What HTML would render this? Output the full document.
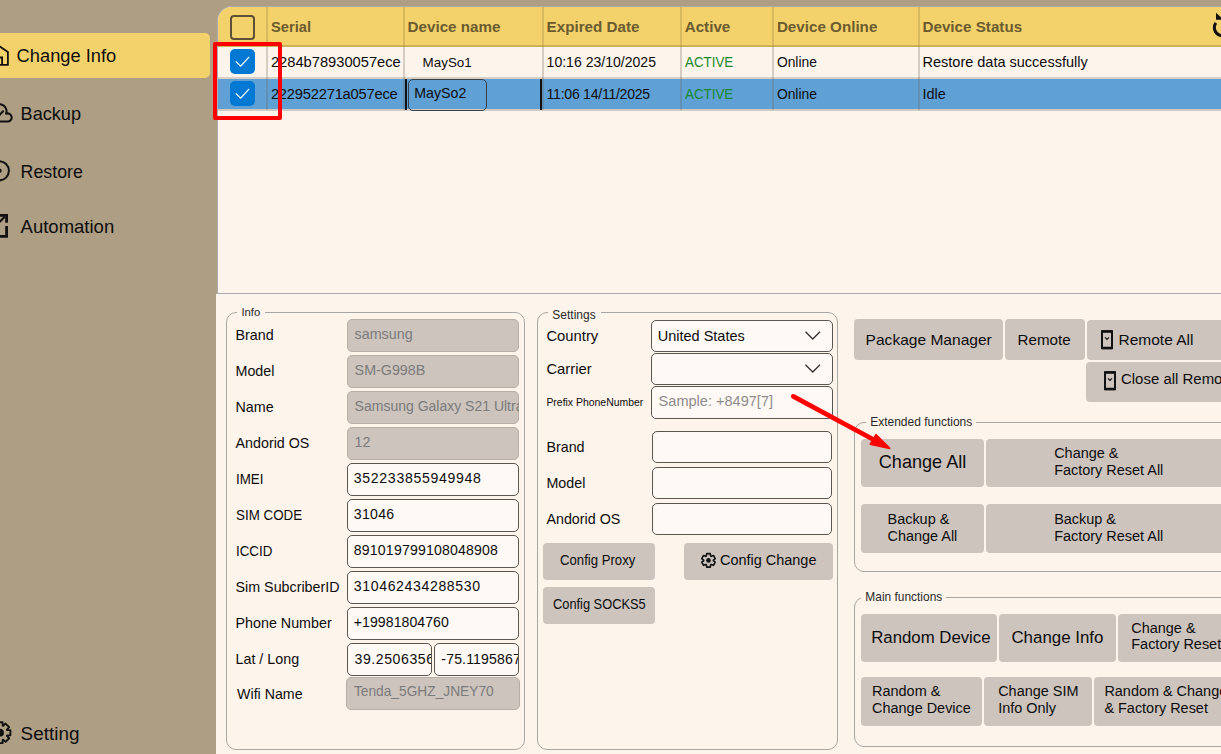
<!DOCTYPE html>
<html><head><meta charset="utf-8">
<style>
html,body{margin:0;padding:0;}
body{width:1221px;height:754px;overflow:hidden;position:relative;background:#AE9E84;font-family:"Liberation Sans",sans-serif;}
.t{position:absolute;line-height:1;white-space:nowrap;}
.r{position:absolute;}
</style></head><body>
<div class="r" style="left:0px;top:33px;width:210px;height:45px;background:#F4D26B;border-radius:0 5px 5px 0;"></div>
<div class="t" style="left:16.60px;top:47px;font-size:18.3px;color:#0d0d0d;">Change Info</div>
<div class="t" style="left:20.60px;top:105px;font-size:18.1px;color:#0d0d0d;">Backup</div>
<div class="t" style="left:20.60px;top:164px;font-size:17.8px;color:#0d0d0d;">Restore</div>
<div class="t" style="left:20.60px;top:218px;font-size:18.5px;color:#0d0d0d;">Automation</div>
<div class="t" style="left:20.60px;top:725px;font-size:18.9px;color:#0d0d0d;">Setting</div>
<svg class="r" style="left:0;top:0" width="30" height="754" viewBox="0 0 30 754">
<path d="M-1.5 45.6 L7.9 52 V64.8 H-2 M2.1 65 V57.5 H-2" fill="none" stroke="#111" stroke-width="1.8" stroke-linejoin="miter"/>
<path d="M-3 121.6 H7.6 A4.1 4.1 0 1 0 6.03 113.71 A7 7 0 0 0 -0.5 104.2 L-4 104.2" fill="none" stroke="#111" stroke-width="2" stroke-linejoin="round"/>
<path d="M-1 115.5 L3 111.3" fill="none" stroke="#111" stroke-width="2" stroke-linecap="round"/>
<circle cx="-0.7" cy="170.8" r="9.6" fill="none" stroke="#111" stroke-width="2"/>
<circle cx="-0.5" cy="170.7" r="2.2" fill="#111"/>
<path d="M-2 236.4 H6.6 V226" fill="none" stroke="#111" stroke-width="2.8"/>
<path d="M-2 215.4 H6.6 V222.7" fill="none" stroke="#111" stroke-width="2.8"/>
<path d="M-1 222.5 L5 216.5" fill="none" stroke="#111" stroke-width="2.2"/>
<path d="M7.11 730.02 L10.39 730.16 L10.39 735.24 L7.11 735.38 L6.92 735.84 L9.15 738.25 L5.55 741.85 L3.14 739.62 L2.68 739.81 L2.54 743.09 L-2.54 743.09 L-2.68 739.81 L-3.14 739.62 L-5.55 741.85 L-9.15 738.25 L-6.92 735.84 L-7.11 735.38 L-10.39 735.24 L-10.39 730.16 L-7.11 730.02 L-6.92 729.56 L-9.15 727.15 L-5.55 723.55 L-3.14 725.78 L-2.68 725.59 L-2.54 722.31 L2.54 722.31 L2.68 725.59 L3.14 725.78 L5.55 723.55 L9.15 727.15 L6.92 729.56Z" fill="none" stroke="#111" stroke-width="1.9" stroke-linejoin="round"/>
<circle cx="0" cy="732.7" r="3.9" fill="#111"/>
</svg>
<div class="r" style="left:217px;top:6px;width:1004px;height:288px;background:#FDF4EB;border-top-left-radius:15px;border-top:1px solid #ADADAD;border-left:1px solid #ADADAD;border-bottom:1px solid #ABABAB;box-sizing:border-box;"></div>
<div class="r" style="left:218px;top:7px;width:1003px;height:40px;background:#F4D26B;border-top-left-radius:14px;border-bottom:2px solid #CDB05A;box-sizing:border-box;"></div>
<div class="r" style="left:266px;top:7px;width:2px;height:38px;background:#D8BA5E;"></div>
<div class="r" style="left:266px;top:45px;width:2px;height:2px;background:#C0A452;"></div>
<div class="r" style="left:403px;top:7px;width:2px;height:38px;background:#D8BA5E;"></div>
<div class="r" style="left:403px;top:45px;width:2px;height:2px;background:#C0A452;"></div>
<div class="r" style="left:542px;top:7px;width:2px;height:38px;background:#D8BA5E;"></div>
<div class="r" style="left:542px;top:45px;width:2px;height:2px;background:#C0A452;"></div>
<div class="r" style="left:680px;top:7px;width:2px;height:38px;background:#D8BA5E;"></div>
<div class="r" style="left:680px;top:45px;width:2px;height:2px;background:#C0A452;"></div>
<div class="r" style="left:772px;top:7px;width:2px;height:38px;background:#D8BA5E;"></div>
<div class="r" style="left:772px;top:45px;width:2px;height:2px;background:#C0A452;"></div>
<div class="r" style="left:918px;top:7px;width:2px;height:38px;background:#D8BA5E;"></div>
<div class="r" style="left:918px;top:45px;width:2px;height:2px;background:#C0A452;"></div>
<div class="r" style="left:230px;top:14.5px;width:25px;height:25.0px;border:2px solid #5E5035;border-radius:4px;box-sizing:border-box;"></div>
<div class="t" style="left:270.90px;top:19px;font-size:15.2px;color:#6B5B30;font-weight:700;transform:scaleX(0.97);transform-origin:0 0;">Serial</div>
<div class="t" style="left:407.60px;top:19px;font-size:15.2px;color:#6B5B30;font-weight:700;">Device name</div>
<div class="t" style="left:546.60px;top:19px;font-size:15.2px;color:#6B5B30;font-weight:700;">Expired Date</div>
<div class="t" style="left:684.70px;top:19px;font-size:15.2px;color:#6B5B30;font-weight:700;">Active</div>
<div class="t" style="left:776.90px;top:19px;font-size:15.2px;color:#6B5B30;font-weight:700;">Device Online</div>
<div class="t" style="left:922.50px;top:19px;font-size:15.2px;color:#6B5B30;font-weight:700;">Device Status</div>
<svg class="r" style="left:1205px;top:8px" width="16" height="34" viewBox="0 0 16 34">
<path d="M10.9 14.9 A8.1 8.1 0 1 0 25.6 19.5" fill="none" stroke="#111" stroke-width="3"/>
<path d="M11 4.7 L11 11.8 L19 11.8 Z" fill="#111"/>
</svg>
<div class="r" style="left:218px;top:47px;width:1003px;height:30px;background:#FDF4EB;"></div>
<div class="r" style="left:218px;top:77px;width:1003px;height:1.5px;background:#D8CFC5;"></div>
<div class="r" style="left:218px;top:78.5px;width:1003px;height:30.5px;background:#5FA0D5;"></div>
<div class="r" style="left:218px;top:109px;width:1003px;height:2px;background:#D3CAC0;"></div>
<div class="r" style="left:266px;top:47px;width:2px;height:63px;background:rgba(110,100,90,0.28);"></div>
<div class="r" style="left:403px;top:47px;width:2px;height:63px;background:rgba(110,100,90,0.28);"></div>
<div class="r" style="left:542px;top:47px;width:2px;height:63px;background:rgba(110,100,90,0.28);"></div>
<div class="r" style="left:680px;top:47px;width:2px;height:63px;background:rgba(110,100,90,0.28);"></div>
<div class="r" style="left:772px;top:47px;width:2px;height:63px;background:rgba(110,100,90,0.28);"></div>
<div class="r" style="left:918px;top:47px;width:2px;height:63px;background:rgba(110,100,90,0.28);"></div>
<div class="r" style="left:230px;top:49px;width:25px;height:25px;background:#0078D4;border-radius:5px;"></div>
<svg class="r" style="left:230px;top:49px" width="25" height="25" viewBox="0 0 25 25"><path d="M5.8 12.4 L10.6 17.2 L19.2 7.9" fill="none" stroke="#fff" stroke-width="1.2"/></svg>
<div class="r" style="left:230px;top:81px;width:25px;height:25px;background:#0078D4;border-radius:5px;"></div>
<svg class="r" style="left:230px;top:81px" width="25" height="25" viewBox="0 0 25 25"><path d="M5.8 12.4 L10.6 17.2 L19.2 7.9" fill="none" stroke="#fff" stroke-width="1.2"/></svg>
<div class="t" style="left:270.90px;top:55px;font-size:14.7px;color:#0d0d0d;">2284b78930057ece</div>
<div class="t" style="left:270.90px;top:87px;font-size:14.7px;color:#0d0d0d;letter-spacing:-0.2px;">222952271a057ece</div>
<div class="t" style="left:422.60px;top:56px;font-size:13.4px;color:#0d0d0d;">MaySo1</div>
<div class="r" style="left:405px;top:78.5px;width:2.1999999999999886px;height:31.5px;background:#111;"></div>
<div class="r" style="left:540px;top:78.5px;width:2px;height:31.5px;background:#111;"></div>
<div class="r" style="left:408px;top:79px;width:79px;height:31.5px;border:1px solid #3A4048;border-radius:5px;box-sizing:border-box;"></div>
<div class="t" style="left:414.30px;top:86px;font-size:14.2px;color:#0d0d0d;">MaySo2</div>
<div class="t" style="left:546.60px;top:55px;font-size:14.05px;color:#0d0d0d;">10:16 23/10/2025</div>
<div class="t" style="left:546.60px;top:87px;font-size:14.05px;color:#0d0d0d;letter-spacing:-0.25px;">11:06 14/11/2025</div>
<div class="t" style="left:684.70px;top:55px;font-size:14.5px;color:#1A8A2C;transform:scaleX(0.92);transform-origin:0 0;">ACTIVE</div>
<div class="t" style="left:684.70px;top:87px;font-size:14.5px;color:#1A8A2C;transform:scaleX(0.92);transform-origin:0 0;">ACTIVE</div>
<div class="t" style="left:776.90px;top:56px;font-size:13.85px;color:#0d0d0d;">Online</div>
<div class="t" style="left:776.90px;top:88px;font-size:13.85px;color:#0d0d0d;">Online</div>
<div class="t" style="left:922.50px;top:55px;font-size:14.5px;color:#0d0d0d;">Restore data successfully</div>
<div class="t" style="left:922.50px;top:87px;font-size:14.5px;color:#0d0d0d;">Idle</div>
<div class="r" style="left:213px;top:41.5px;width:69px;height:78.0px;border:4.6px solid #FF0000;border-radius:2px;box-sizing:border-box;"></div>
<div class="r" style="left:216px;top:294px;width:1005px;height:460px;background:#FDF4EB;"></div>
<div class="r" style="left:226px;top:312px;width:299px;height:438px;border:1px solid #A9A7A4;border-radius:10px;box-sizing:border-box;"></div>
<div class="r" style="left:237px;top:311px;width:28px;height:3px;background:#FDF4EB;"></div>
<div class="t" style="left:241.40px;top:307px;font-size:11.3px;color:#2a2a2a;">Info</div>
<div class="t" style="left:235.50px;top:328px;font-size:14.3px;color:#0d0d0d;">Brand</div>
<div class="t" style="left:235.50px;top:364px;font-size:14.3px;color:#0d0d0d;">Model</div>
<div class="t" style="left:235.50px;top:400px;font-size:14.3px;color:#0d0d0d;">Name</div>
<div class="t" style="left:235.50px;top:436px;font-size:14.3px;color:#0d0d0d;">Andorid OS</div>
<div class="t" style="left:235.50px;top:472px;font-size:14.3px;color:#0d0d0d;transform:scaleX(0.935);transform-origin:0 0;">IMEI</div>
<div class="t" style="left:235.50px;top:508px;font-size:14.3px;color:#0d0d0d;transform:scaleX(0.935);transform-origin:0 0;">SIM CODE</div>
<div class="t" style="left:235.50px;top:544px;font-size:14.3px;color:#0d0d0d;transform:scaleX(0.935);transform-origin:0 0;">ICCID</div>
<div class="t" style="left:235.50px;top:580px;font-size:14.3px;color:#0d0d0d;">Sim SubcriberID</div>
<div class="t" style="left:235.50px;top:616px;font-size:14.3px;color:#0d0d0d;">Phone Number</div>
<div class="t" style="left:235.50px;top:652px;font-size:14.3px;color:#0d0d0d;">Lat / Long</div>
<div class="t" style="left:237.10px;top:687px;font-size:14.2px;color:#0d0d0d;">Wifi Name</div>
<div class="r" style="left:347px;top:319px;width:172px;height:33px;background:#CCC4BD;border:1px solid #B7AFA8;border-radius:5px;box-sizing:border-box;"></div>
<div class="t" style="left:354.60px;top:327px;font-size:14.3px;color:#7B7B7B;width:164px;overflow:hidden;padding-bottom:5px;">samsung</div>
<div class="r" style="left:347px;top:355px;width:172px;height:33px;background:#CCC4BD;border:1px solid #B7AFA8;border-radius:5px;box-sizing:border-box;"></div>
<div class="t" style="left:354.60px;top:363px;font-size:14.3px;color:#7B7B7B;width:164px;overflow:hidden;padding-bottom:5px;">SM-G998B</div>
<div class="r" style="left:347px;top:391px;width:172px;height:33px;background:#CCC4BD;border:1px solid #B7AFA8;border-radius:5px;box-sizing:border-box;"></div>
<div class="t" style="left:354.60px;top:399px;font-size:14.0px;color:#7B7B7B;width:164px;overflow:hidden;padding-bottom:5px;">Samsung Galaxy S21 Ultra</div>
<div class="r" style="left:347px;top:427px;width:172px;height:33px;background:#CCC4BD;border:1px solid #B7AFA8;border-radius:5px;box-sizing:border-box;"></div>
<div class="t" style="left:354.60px;top:435px;font-size:14.3px;color:#7B7B7B;width:164px;overflow:hidden;padding-bottom:5px;">12</div>
<div class="r" style="left:347px;top:463px;width:172px;height:33px;background:#FEF9F4;border:1px solid #5A5650;border-radius:5px;box-sizing:border-box;"></div>
<div class="t" style="left:353.80px;top:471px;font-size:14.1px;color:#0d0d0d;letter-spacing:0.68px;">352233855949948</div>
<div class="r" style="left:347px;top:499px;width:172px;height:33px;background:#FEF9F4;border:1px solid #5A5650;border-radius:5px;box-sizing:border-box;"></div>
<div class="t" style="left:353.80px;top:507px;font-size:14.1px;color:#0d0d0d;letter-spacing:0.3px;">31046</div>
<div class="r" style="left:347px;top:535px;width:172px;height:33px;background:#FEF9F4;border:1px solid #5A5650;border-radius:5px;box-sizing:border-box;"></div>
<div class="t" style="left:353.80px;top:543px;font-size:14.1px;color:#0d0d0d;letter-spacing:0.18px;">891019799108048908</div>
<div class="r" style="left:347px;top:571px;width:172px;height:33px;background:#FEF9F4;border:1px solid #5A5650;border-radius:5px;box-sizing:border-box;"></div>
<div class="t" style="left:353.80px;top:579px;font-size:14.1px;color:#0d0d0d;letter-spacing:0.62px;">310462434288530</div>
<div class="r" style="left:347px;top:607px;width:172px;height:33px;background:#FEF9F4;border:1px solid #5A5650;border-radius:5px;box-sizing:border-box;"></div>
<div class="t" style="left:353.80px;top:615px;font-size:14.1px;color:#0d0d0d;letter-spacing:0.05px;">+19981804760</div>
<div class="r" style="left:347px;top:643px;width:85px;height:33px;background:#FEF9F4;border:1px solid #5A5650;border-radius:5px;box-sizing:border-box;"></div>
<div class="r" style="left:434px;top:643px;width:85px;height:33px;background:#FEF9F4;border:1px solid #5A5650;border-radius:5px;box-sizing:border-box;"></div>
<div class="t" style="left:354.60px;top:652px;font-size:14.1px;color:#0d0d0d;letter-spacing:0.55px;width:76px;overflow:hidden;">39.2506356</div>
<div class="t" style="left:441.30px;top:652px;font-size:14.1px;color:#0d0d0d;letter-spacing:0.15px;width:76.5px;overflow:hidden;">-75.1195867</div>
<div class="r" style="left:346px;top:677px;width:174px;height:33px;background:#CCC4BD;border:1px solid #B7AFA8;border-radius:5px;box-sizing:border-box;"></div>
<div class="t" style="left:353.90px;top:685px;font-size:13.75px;color:#7B7B7B;">Tenda_5GHZ_JNEY70</div>
<div class="r" style="left:537px;top:312px;width:301px;height:438px;border:1px solid #A9A7A4;border-radius:10px;box-sizing:border-box;"></div>
<div class="r" style="left:548px;top:311px;width:53px;height:3px;background:#FDF4EB;"></div>
<div class="t" style="left:552.30px;top:309px;font-size:12.0px;color:#2a2a2a;">Settings</div>
<div class="t" style="left:546.40px;top:329px;font-size:14.8px;color:#0d0d0d;">Country</div>
<div class="t" style="left:546.40px;top:362px;font-size:14.8px;color:#0d0d0d;">Carrier</div>
<div class="t" style="left:546.40px;top:398px;font-size:10.45px;color:#0d0d0d;">Prefix PhoneNumber</div>
<div class="r" style="left:651px;top:320px;width:182px;height:32px;background:#FEF9F4;border:1px solid #5A5650;border-radius:5px;box-sizing:border-box;"></div>
<svg class="r" style="left:805px;top:331px" width="16" height="9" viewBox="0 0 16 9"><path d="M0.5 0.8 L7.75 8 L15 0.8" fill="none" stroke="#333" stroke-width="1.3"/></svg>
<div class="r" style="left:651px;top:353px;width:182px;height:32px;background:#FEF9F4;border:1px solid #5A5650;border-radius:5px;box-sizing:border-box;"></div>
<svg class="r" style="left:805px;top:364px" width="16" height="9" viewBox="0 0 16 9"><path d="M0.5 0.8 L7.75 8 L15 0.8" fill="none" stroke="#333" stroke-width="1.3"/></svg>
<div class="t" style="left:657.70px;top:329px;font-size:14.5px;color:#0d0d0d;">United States</div>
<div class="r" style="left:651px;top:386px;width:182px;height:33px;background:#FEF9F4;border:1px solid #5A5650;border-radius:5px;box-sizing:border-box;"></div>
<div class="t" style="left:658.60px;top:394px;font-size:14.55px;color:#8C8C8C;">Sample: +8497[7]</div>
<div class="r" style="left:652px;top:431px;width:180px;height:32px;background:#FEF9F4;border:1px solid #5A5650;border-radius:5px;box-sizing:border-box;"></div>
<div class="t" style="left:546.40px;top:440px;font-size:14.3px;color:#0d0d0d;">Brand</div>
<div class="r" style="left:652px;top:467px;width:180px;height:32px;background:#FEF9F4;border:1px solid #5A5650;border-radius:5px;box-sizing:border-box;"></div>
<div class="t" style="left:546.40px;top:476px;font-size:14.3px;color:#0d0d0d;">Model</div>
<div class="r" style="left:652px;top:503px;width:180px;height:32px;background:#FEF9F4;border:1px solid #5A5650;border-radius:5px;box-sizing:border-box;"></div>
<div class="t" style="left:546.40px;top:512px;font-size:14.3px;color:#0d0d0d;">Andorid OS</div>
<div class="r" style="left:543px;top:543px;width:112px;height:37px;background:#CCC4BD;border-radius:4px;"></div>
<div class="r" style="left:684px;top:543px;width:149px;height:37px;background:#CCC4BD;border-radius:4px;"></div>
<div class="r" style="left:543px;top:587px;width:112px;height:37px;background:#CCC4BD;border-radius:4px;"></div>
<div class="t" style="left:560.40px;top:552px;font-size:15.2px;color:#0d0d0d;transform:scaleX(0.8666);transform-origin:0 0;">Config Proxy</div>
<div class="t" style="left:553.30px;top:596px;font-size:15.2px;color:#0d0d0d;transform:scaleX(0.8441);transform-origin:0 0;">Config SOCKS5</div>
<div class="t" style="left:720.30px;top:552px;font-size:15.2px;color:#0d0d0d;transform:scaleX(0.9517);transform-origin:0 0;">Config Change</div>
<svg class="r" style="left:0;top:0" width="1221" height="754" viewBox="0 0 1221 754">
<path d="M706.37 555.99 L706.70 553.64 L710.30 553.64 L710.63 555.99 L711.26 556.35 L713.46 555.46 L715.26 558.58 L713.39 560.04 L713.39 560.76 L715.26 562.22 L713.46 565.34 L711.26 564.45 L710.63 564.81 L710.30 567.16 L706.70 567.16 L706.37 564.81 L705.74 564.45 L703.54 565.34 L701.74 562.22 L703.61 560.76 L703.61 560.04 L701.74 558.58 L703.54 555.46 L705.74 556.35Z" fill="none" stroke="#111" stroke-width="1.6" stroke-linejoin="round"/>
<circle cx="708.5" cy="560.4" r="2.3" fill="#111"/></svg>
<div class="r" style="left:854px;top:319px;width:149px;height:41px;background:#CCC4BD;border-radius:4px;"></div>
<div class="r" style="left:1005px;top:319px;width:80px;height:41px;background:#CCC4BD;border-radius:4px;"></div>
<div class="r" style="left:1087px;top:320px;width:153px;height:40px;background:#CCC4BD;border-radius:4px;"></div>
<div class="r" style="left:1086px;top:362px;width:154px;height:40px;background:#CCC4BD;border-radius:4px;"></div>
<div class="t" style="left:865.60px;top:332px;font-size:15.55px;color:#0d0d0d;">Package Manager</div>
<div class="t" style="left:1017.60px;top:332px;font-size:15.15px;color:#0d0d0d;">Remote</div>
<div class="t" style="left:1118.50px;top:332px;font-size:15.5px;color:#0d0d0d;">Remote All</div>
<div class="t" style="left:1121.40px;top:371px;font-size:15.5px;color:#0d0d0d;transform:scaleX(0.965);transform-origin:0 0;">Close all Remote</div>
<svg class="r" style="left:1100.6px;top:329.9px" width="12" height="20" viewBox="0 0 12 20">
<rect x="1" y="1.2" width="10" height="17" fill="none" stroke="#111" stroke-width="2"/>
<path d="M1 1.5 H11 M1 18 H11" stroke="#111" stroke-width="2.6"/>
<path d="M4 7.3 L6 9.3 L8 7.3" fill="none" stroke="#111" stroke-width="1.2"/>
</svg>
<svg class="r" style="left:1103.9px;top:371px" width="12" height="20" viewBox="0 0 12 20">
<rect x="1" y="1.2" width="10" height="17" fill="none" stroke="#111" stroke-width="2"/>
<path d="M1 1.5 H11 M1 18 H11" stroke="#111" stroke-width="2.6"/>
<path d="M4 7.3 L6 9.3 L8 7.3" fill="none" stroke="#111" stroke-width="1.2"/>
</svg>
<div class="r" style="left:854px;top:422px;width:386px;height:150px;border:1px solid #A9A7A4;border-radius:10px;box-sizing:border-box;"></div>
<div class="r" style="left:866px;top:421px;width:110px;height:3px;background:#FDF4EB;"></div>
<div class="t" style="left:870.20px;top:416px;font-size:12.0px;color:#2a2a2a;">Extended functions</div>
<div class="r" style="left:861px;top:439px;width:123px;height:48px;background:#CCC4BD;border-radius:4px;"></div>
<div class="r" style="left:986px;top:439px;width:254px;height:48px;background:#CCC4BD;border-radius:4px;"></div>
<div class="r" style="left:861px;top:504px;width:123px;height:49px;background:#CCC4BD;border-radius:4px;"></div>
<div class="r" style="left:986px;top:504px;width:254px;height:49px;background:#CCC4BD;border-radius:4px;"></div>
<div class="t" style="left:878.80px;top:453px;font-size:18.1px;color:#0d0d0d;">Change All</div>
<div class="t" style="left:1054.20px;top:446px;font-size:14.45px;color:#0d0d0d;">Change &amp;</div>
<div class="t" style="left:1054.20px;top:463px;font-size:14.45px;color:#0d0d0d;">Factory Reset All</div>
<div class="t" style="left:887.50px;top:512px;font-size:14.45px;color:#0d0d0d;">Backup &amp;</div>
<div class="t" style="left:887.50px;top:529px;font-size:14.45px;color:#0d0d0d;">Change All</div>
<div class="t" style="left:1054.20px;top:512px;font-size:14.45px;color:#0d0d0d;">Backup &amp;</div>
<div class="t" style="left:1054.20px;top:529px;font-size:14.45px;color:#0d0d0d;">Factory Reset All</div>
<div class="r" style="left:854px;top:597px;width:386px;height:150px;border:1px solid #A9A7A4;border-radius:10px;box-sizing:border-box;"></div>
<div class="r" style="left:861px;top:596px;width:85px;height:3px;background:#FDF4EB;"></div>
<div class="t" style="left:865.30px;top:592px;font-size:11.95px;color:#2a2a2a;width:77px;overflow:hidden;">Main functions</div>
<div class="r" style="left:861px;top:614px;width:136px;height:48px;background:#CCC4BD;border-radius:4px;"></div>
<div class="r" style="left:999px;top:614px;width:117px;height:48px;background:#CCC4BD;border-radius:4px;"></div>
<div class="r" style="left:1118px;top:614px;width:122px;height:48px;background:#CCC4BD;border-radius:4px;"></div>
<div class="r" style="left:861px;top:677px;width:121px;height:49px;background:#CCC4BD;border-radius:4px;"></div>
<div class="r" style="left:984px;top:677px;width:108px;height:49px;background:#CCC4BD;border-radius:4px;"></div>
<div class="r" style="left:1094px;top:677px;width:146px;height:49px;background:#CCC4BD;border-radius:4px;"></div>
<div class="t" style="left:871.20px;top:630px;font-size:16.8px;color:#0d0d0d;">Random Device</div>
<div class="t" style="left:1011.40px;top:630px;font-size:16.9px;color:#0d0d0d;">Change Info</div>
<div class="t" style="left:1131.30px;top:621px;font-size:14.45px;color:#0d0d0d;">Change &amp;</div>
<div class="t" style="left:1131.30px;top:637px;font-size:14.45px;color:#0d0d0d;">Factory Reset</div>
<div class="t" style="left:872.10px;top:684px;font-size:14.45px;color:#0d0d0d;">Random &amp;</div>
<div class="t" style="left:872.10px;top:701px;font-size:14.45px;color:#0d0d0d;">Change Device</div>
<div class="t" style="left:998.20px;top:684px;font-size:14.45px;color:#0d0d0d;">Change SIM</div>
<div class="t" style="left:998.20px;top:701px;font-size:14.45px;color:#0d0d0d;">Info Only</div>
<div class="t" style="left:1104.40px;top:684px;font-size:14.45px;color:#0d0d0d;">Random &amp; Change</div>
<div class="t" style="left:1104.40px;top:701px;font-size:14.45px;color:#0d0d0d;">&amp; Factory Reset</div>
<svg class="r" style="left:0;top:0" width="1221" height="754" viewBox="0 0 1221 754">
<path d="M793.3 396.4 L878 442" stroke="#FF0000" stroke-width="4.8" stroke-linecap="round"/>
<path d="M889.8 448.4 L876 434.6 L870.2 444.2 Z" fill="#FF0000" stroke="#FF0000" stroke-width="1.5" stroke-linejoin="round"/>
</svg>
</body></html>
